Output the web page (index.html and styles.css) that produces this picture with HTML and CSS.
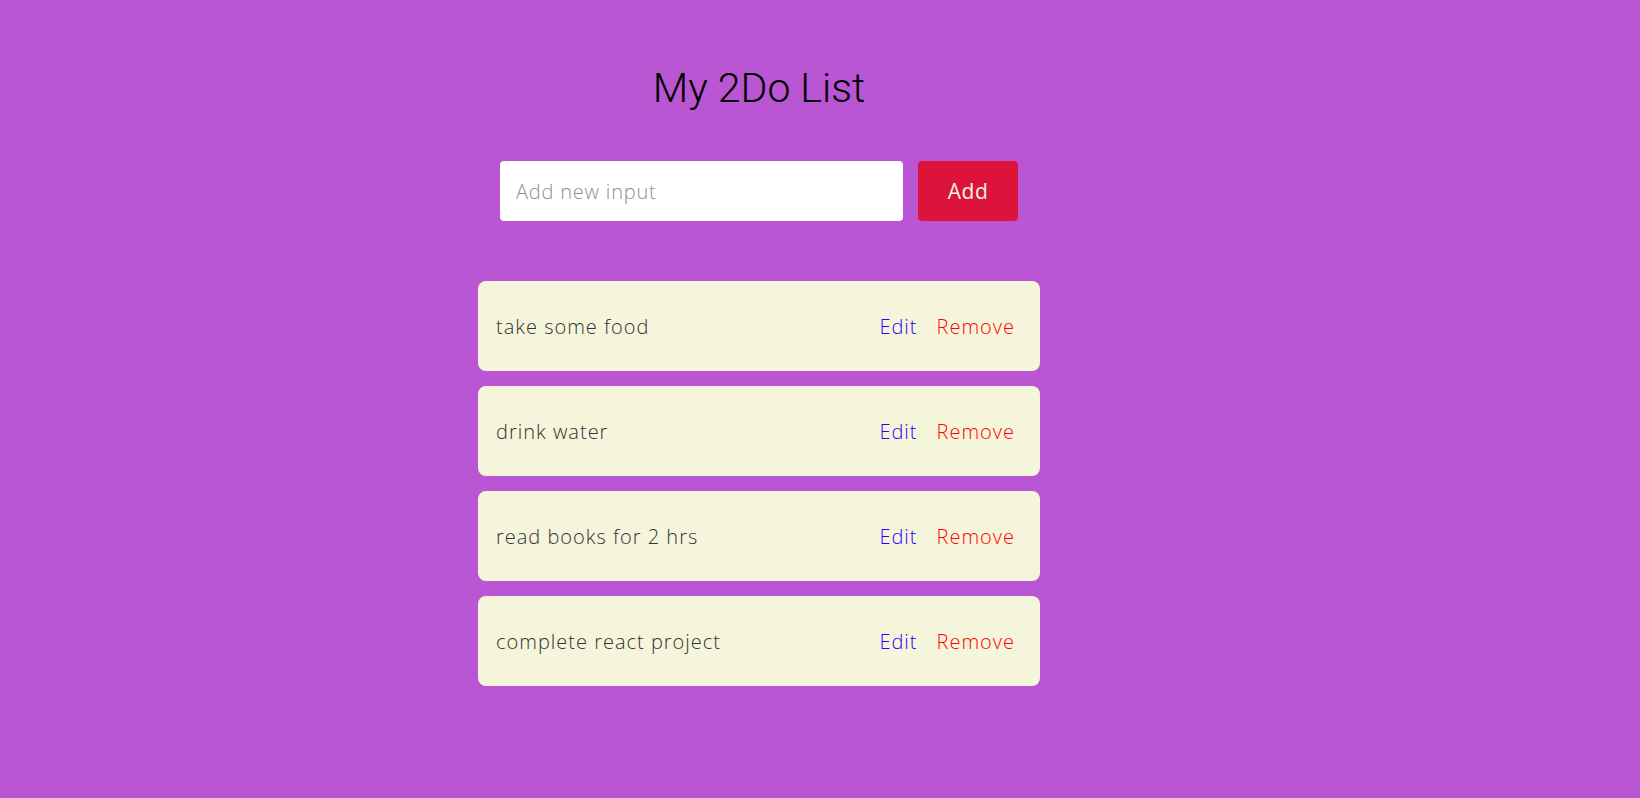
FILE: index.html
```html
<!DOCTYPE html>
<html lang="en">
<head>
<meta charset="utf-8">
<title>My 2Do List</title>
<link rel="stylesheet" href="styles.css">
</head>
<body>
<main class="app">
  <h1 class="title">My 2Do List</h1>
  <form class="add-form">
    <input class="add-input" type="text" placeholder="Add new input">
    <button class="add-btn" type="button">Add</button>
  </form>
  <ul class="todo-list">
    <li class="todo-item"><span class="todo-text">take some food</span><span class="actions"><span class="edit">Edit</span><span class="remove">Remove</span></span></li>
    <li class="todo-item"><span class="todo-text">drink water</span><span class="actions"><span class="edit">Edit</span><span class="remove">Remove</span></span></li>
    <li class="todo-item"><span class="todo-text">read books for 2 hrs</span><span class="actions"><span class="edit">Edit</span><span class="remove">Remove</span></span></li>
    <li class="todo-item"><span class="todo-text">complete react project</span><span class="actions"><span class="edit">Edit</span><span class="remove">Remove</span></span></li>
  </ul>
</main>
</body>
</html>
```

FILE: styles.css
```css
* { box-sizing: border-box; }
html, body {
  margin: 0;
  padding: 0;
  background: #ba55d3;
  height: 100%;
}
body {
  font-family: "Open Sans", "Noto Sans", sans-serif;
}
.app {
  display: flex;
  flex-direction: column;
  align-items: center;
  padding: 64px 122px 0 0;
}
.title {
  margin: 0;
  font-family: Roboto, "Liberation Sans", sans-serif;
  font-weight: 300;
  font-size: 41px;
  line-height: 49px;
  color: #000;
}
.add-form {
  display: flex;
  gap: 15px;
  margin-top: 48px;
}
.add-input {
  width: 403px;
  height: 60px;
  border: none;
  border-radius: 4px;
  padding: 0 16px;
  font-family: "Open Sans", "Noto Sans", sans-serif;
  font-weight: 300;
  font-size: 20px;
  letter-spacing: 0.8px;
  background: #fff;
  outline: none;
}
.add-input::placeholder { color: #8f8f8f; }
.add-btn {
  width: 100px;
  height: 60px;
  border: none;
  border-radius: 4px;
  background: #dc143c;
  color: #f5f5dc;
  font-family: "Open Sans", "Noto Sans", sans-serif;
  font-weight: 400;
  font-size: 21px;
  letter-spacing: 0.5px;
}
.todo-list {
  list-style: none;
  margin: 60px 0 0;
  padding: 0;
  width: 562px;
  display: flex;
  flex-direction: column;
  gap: 15px;
}
.todo-item {
  height: 90px;
  background: #f5f5dc;
  border-radius: 8px;
  display: flex;
  align-items: center;
  justify-content: space-between;
  padding: 0 25px 0 18px;
  font-weight: 300;
  font-size: 20px;
  letter-spacing: 1px;
}
.todo-text { color: #333; }
.actions {
  display: flex;
  gap: 19px;
}
.edit { color: #2a00ff; }
.remove { color: #ff0000; }
```
